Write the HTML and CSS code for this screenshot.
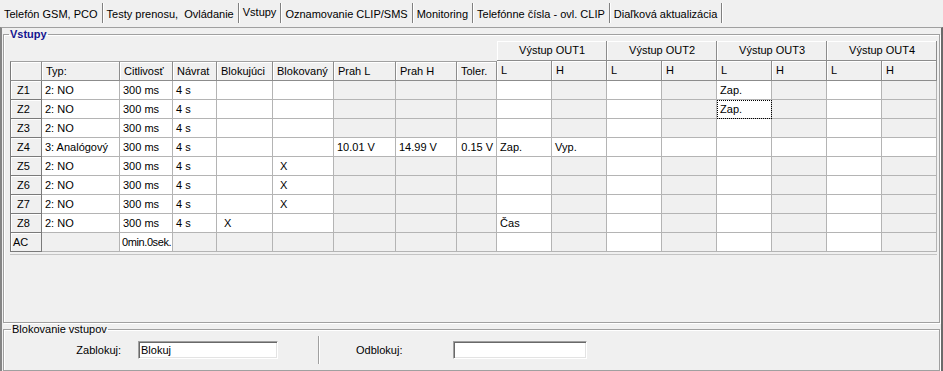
FILE: index.html
```html
<!DOCTYPE html>
<html lang="sk">
<head>
    <meta charset="UTF-8">
    <title>Vstupy</title>
    <link rel="stylesheet" href="styles.css">
</head>
<body>

<ul class="tabs">
    <li>Telefón GSM, PCO</li>
    <li>Testy prenosu,&nbsp; Ovládanie</li>
    <li class="active">Vstupy</li>
    <li>Oznamovanie CLIP/SMS</li>
    <li>Monitoring</li>
    <li>Telefónne čísla - ovl. CLIP</li>
    <li>Diaľková aktualizácia</li>
</ul>

<div class="panel">
    <!-- Inputs grid -->
    <fieldset class="group inputs">
        <legend>Vstupy</legend>
        <table class="grid">
            <colgroup>
                <col class="c-zone">
                <col class="c-type">
                <col class="c-sens">
                <col class="c-back">
                <col class="c-blk">
                <col class="c-blkd">
                <col class="c-thr">
                <col class="c-thr2">
                <col class="c-tol">
                <col class="c-out"><col class="c-out">
                <col class="c-out"><col class="c-out">
                <col class="c-out"><col class="c-out">
                <col class="c-out"><col class="c-out">
            </colgroup>
            <thead>
                <tr>
                    <th class="blank" colspan="9"></th>
                    <th class="out" colspan="2">Výstup OUT1</th>
                    <th class="out" colspan="2">Výstup OUT2</th>
                    <th class="out" colspan="2">Výstup OUT3</th>
                    <th class="out" colspan="2">Výstup OUT4</th>
                </tr>
                <tr>
                    <th class="top first"></th>
                    <th class="top">Typ:</th>
                    <th class="top">Citlivosť</th>
                    <th class="top">Návrat</th>
                    <th class="top">Blokujúci</th>
                    <th class="top">Blokovaný</th>
                    <th class="top">Prah L</th>
                    <th class="top">Prah H</th>
                    <th class="top">Toler.</th>
                    <th>L</th><th>H</th>
                    <th>L</th><th>H</th>
                    <th>L</th><th>H</th>
                    <th>L</th><th>H</th>
                </tr>
            </thead>
            <tbody>
                <tr>
                    <th>Z1</th><td>2: NO</td><td>300 ms</td><td>4 s</td><td></td><td></td>
                    <td class="off"></td><td class="off"></td><td class="off"></td>
                    <td></td><td class="off"></td><td></td><td class="off"></td>
                    <td>Zap.</td><td class="off"></td><td></td><td class="off"></td>
                </tr>
                <tr>
                    <th>Z2</th><td>2: NO</td><td>300 ms</td><td>4 s</td><td></td><td></td>
                    <td class="off"></td><td class="off"></td><td class="off"></td>
                    <td></td><td class="off"></td><td></td><td class="off"></td>
                    <td class="focus">Zap.</td><td class="off"></td><td></td><td class="off"></td>
                </tr>
                <tr>
                    <th>Z3</th><td>2: NO</td><td>300 ms</td><td>4 s</td><td></td><td></td>
                    <td class="off"></td><td class="off"></td><td class="off"></td>
                    <td></td><td class="off"></td><td></td><td class="off"></td>
                    <td></td><td class="off"></td><td></td><td class="off"></td>
                </tr>
                <tr>
                    <th>Z4</th><td>3: Analógový</td><td>300 ms</td><td>4 s</td><td></td><td></td>
                    <td>10.01 V</td><td>14.99 V</td><td class="num">0.15 V</td>
                    <td>Zap.</td><td>Vyp.</td><td></td><td></td>
                    <td></td><td></td><td></td><td></td>
                </tr>
                <tr>
                    <th>Z5</th><td>2: NO</td><td>300 ms</td><td>4 s</td><td></td><td class="mark">X</td>
                    <td class="off"></td><td class="off"></td><td class="off"></td>
                    <td></td><td class="off"></td><td></td><td class="off"></td>
                    <td></td><td class="off"></td><td></td><td class="off"></td>
                </tr>
                <tr>
                    <th>Z6</th><td>2: NO</td><td>300 ms</td><td>4 s</td><td></td><td class="mark">X</td>
                    <td class="off"></td><td class="off"></td><td class="off"></td>
                    <td></td><td class="off"></td><td></td><td class="off"></td>
                    <td></td><td class="off"></td><td></td><td class="off"></td>
                </tr>
                <tr>
                    <th>Z7</th><td>2: NO</td><td>300 ms</td><td>4 s</td><td></td><td class="mark">X</td>
                    <td class="off"></td><td class="off"></td><td class="off"></td>
                    <td></td><td class="off"></td><td></td><td class="off"></td>
                    <td></td><td class="off"></td><td></td><td class="off"></td>
                </tr>
                <tr>
                    <th>Z8</th><td>2: NO</td><td>300 ms</td><td>4 s</td><td class="mark">X</td><td></td>
                    <td class="off"></td><td class="off"></td><td class="off"></td>
                    <td>Čas</td><td class="off"></td><td></td><td class="off"></td>
                    <td></td><td class="off"></td><td></td><td class="off"></td>
                </tr>
                <tr>
                    <th class="ac">AC</th><td class="off"></td><td class="tight">0min.0sek.</td><td class="off"></td><td class="off"></td><td class="off"></td>
                    <td class="off"></td><td class="off"></td><td class="off"></td>
                    <td></td><td class="off"></td><td></td><td class="off"></td>
                    <td></td><td class="off"></td><td></td><td class="off"></td>
                </tr>
            </tbody>
        </table>
    </fieldset>

    <!-- Blocking -->
    <fieldset class="group blocking">
        <legend>Blokovanie vstupov</legend>
        <div class="block-row">
            <label class="lbl" for="lock">Zablokuj:</label>
            <input class="edit" id="lock" type="text" value="Blokuj">
            <span class="sep"></span>
            <label class="lbl lbl-un" for="unlock">Odblokuj:</label>
            <input class="edit edit-un" id="unlock" type="text">
        </div>
    </fieldset>
</div>

</body>
</html>
```

FILE: styles.css
```css
/* General */
* {
    box-sizing: border-box;
}
body {
    margin: 0;
    width: 943px;
    height: 371px;
    overflow: hidden;
    background-color: #f0f0f0;
    font-family: "Liberation Sans", Arial, sans-serif;
    font-size: 11px;
    color: #000;
}

/* Tabs */
.tabs {
    display: flex;
    height: 27px;
    margin: 0;
    padding: 0;
    list-style: none;
}
.tabs li {
    height: 20px;
    margin-top: 3px;
    padding: 5px 4px 2px;
    line-height: 13px;
    white-space: nowrap;
    border-right: 1px solid #808080;
    box-shadow: 1px 0 0 #fff;
}
.tabs li.active {
    padding-top: 3px;
}

/* Page panel */
.panel {
    display: flex;
    flex-direction: column;
    height: 344px;
    padding: 0 1px;
    border-top: 1px solid #a0a0a0;
    border-left: 2px solid #858585;
    border-right: 2px solid #6a6a6a;
}
.group {
    margin: 0;
    min-width: 0;
    border: 1px solid #a0a0a0;
    box-shadow: inset 1px 1px 0 #fff, 1px 1px 0 #fff;
}
.group legend {
    padding: 0 1px;
    line-height: 13px;
}
.inputs {
    flex: 1;
    padding: 0 0 0 6px;
}
.inputs legend {
    margin-left: -1px;
    font-weight: bold;
    color: #14148f;
}
.blocking {
    padding: 0 0 6px;
}
.blocking legend {
    margin-left: 7px;
}

/* Grid */
.grid {
    table-layout: fixed;
    border-collapse: separate;
    border-spacing: 0;
    width: 927px;
    border-bottom: 2px solid #f0f0f0;
    box-shadow: 0 1px 0 #c4c4c4;
}
.c-zone { width: 32px; }
.c-type { width: 78px; }
.c-sens { width: 53px; }
.c-back { width: 44px; }
.c-blk { width: 56px; }
.c-blkd { width: 61px; }
.c-thr { width: 62px; }
.c-thr2 { width: 61px; }
.c-tol { width: 40px; }
.c-out { width: 55px; }

.grid th,
.grid td {
    height: 19px;
    padding: 0 3px;
    line-height: 13px;
    text-align: left;
    font-weight: normal;
    white-space: nowrap;
    overflow: hidden;
    background-color: #fff;
    border-right: 1px solid #b4b4b4;
    border-bottom: 1px solid #b4b4b4;
}
.grid td.off {
    background-color: #f0f0f0;
}
.grid td.num {
    text-align: right;
}
.grid td.tight {
    padding: 0 0 0 2px;
    letter-spacing: -0.4px;
}
.grid td.mark {
    padding-left: 7px;
}
.grid td.focus {
    outline: 1px dotted #000;
    outline-offset: -1px;
}
.grid thead th {
    height: 20px;
    padding-left: 4px;
    background-color: #f0f0f0;
    border-right-color: #8c8c8c;
    border-bottom-color: #8c8c8c;
    box-shadow: inset 1px 1px 0 #fff;
}
.grid thead th.blank {
    background: none;
    border: 0;
    box-shadow: none;
}
.grid thead th.out {
    text-align: center;
}
.grid thead th.top {
    border-top: 1px solid #a0a0a0;
}
.grid th.first,
.grid tbody th {
    border-left: 1px solid #7a7a7a;
}
.grid tbody th {
    padding-left: 6px;
    background-color: #f0f0f0;
    border-right-color: #7a7a7a;
    border-bottom-color: #7a7a7a;
    box-shadow: inset 1px 1px 0 #fff;
}
.grid tbody th.ac {
    padding-left: 2px;
}

/* Blocking row */
.block-row {
    display: flex;
    align-items: center;
    height: 28px;
    padding-left: 71px;
}
.lbl {
    width: 46px;
    margin-right: 17px;
    text-align: right;
}
.lbl-un {
    margin-left: 36px;
    margin-right: 51px;
    text-align: left;
}
.edit {
    width: 140px;
    height: 18px;
    margin: 0;
    padding: 0 2px;
    font: inherit;
    background-color: #fff;
    border: 1px solid;
    border-color: #a0a0a0 #fff #fff #a0a0a0;
    box-shadow: inset 1px 1px 0 #696969, inset -1px -1px 0 #e3e3e3;
    outline: none;
}
.edit-un {
    width: 134px;
}
.sep {
    width: 2px;
    height: 28px;
    margin-left: 40px;
    border-left: 1px solid #a0a0a0;
    border-right: 1px solid #fff;
}
```
